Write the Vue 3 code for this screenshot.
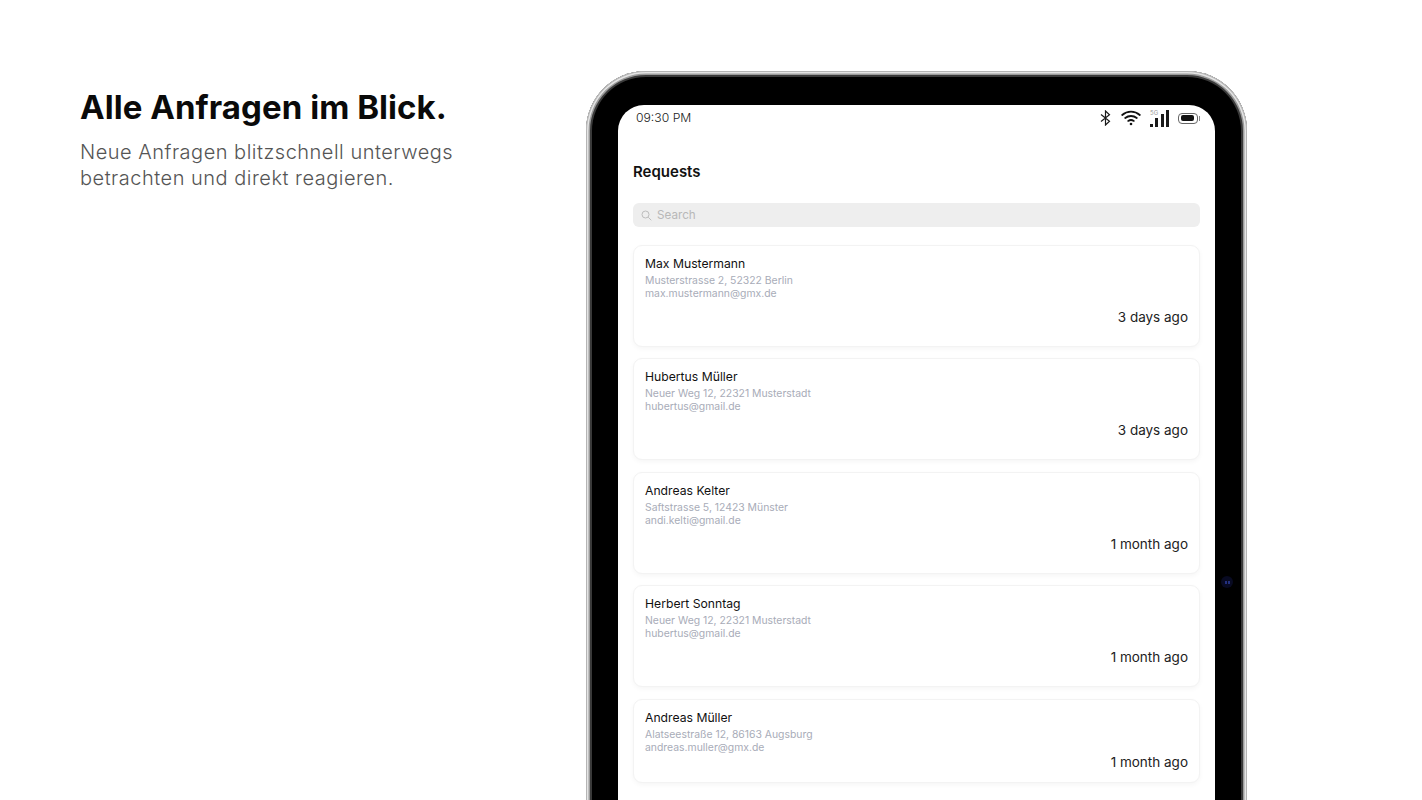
<template>
  <div class="page">
    <section class="intro">
      <h1>Alle Anfragen im Blick.</h1>
      <p>Neue Anfragen blitzschnell unterwegs<br />betrachten und direkt reagieren.</p>
    </section>

    <div class="device">
      <span class="camera"><i></i><i></i></span>
      <main class="screen">
        <div class="status">
          <span class="clock">09:30 PM</span>
          <div class="status-icons">
            <svg class="bluetooth" width="11" height="16" viewBox="0 0 11 16" fill="none" stroke="#1a1a1a" stroke-width="1.2">
              <path d="M1 4.5 9.5 11.2 5.5 15V1l4 3.8L1 11.5" />
            </svg>
            <svg width="20" height="16" viewBox="0 0 20 16" fill="none" stroke="#111" stroke-width="1.8" stroke-linecap="round">
              <path d="M1.2 5C6.2.6 13.8.6 18.800 5" />
              <path d="M4.2 8C7.600 5.300 12.400 5.300 15.800 8" />
              <path d="M7.200 10.900C8.900 9.800 11.100 9.800 12.800 10.900" />
              <circle cx="10" cy="14" r="1.300" fill="#111" stroke="none" />
            </svg>
            <div class="signal">
              <span class="five-g">5G</span>
              <i v-for="h in bars" :key="h" :style="{ height: h + 'px' }"></i>
            </div>
            <div class="battery"><span></span></div>
          </div>
        </div>

        <h2>Requests</h2>

        <div class="search">
          <svg width="11" height="11" viewBox="0 0 11 11" fill="none" stroke="#bdbdbd" stroke-width="1">
            <circle cx="4.500" cy="4.500" r="3.500" />
            <path d="M7.200 7.200 10.300 10.300" />
          </svg>
          <span>Search</span>
        </div>

        <div class="list">
          <article v-for="req in requests" :key="req.name" class="card" :class="{ short: req.short }">
            <div class="name">{{ req.name }}</div>
            <div class="meta">{{ req.address }}</div>
            <div class="meta">{{ req.email }}</div>
            <div class="age">{{ req.age }}</div>
          </article>
        </div>
      </main>
    </div>
  </div>
</template>

<script setup>
const bars = [3, 9, 13, 17]

const requests = [
  { name: 'Max Mustermann', address: 'Musterstrasse 2, 52322 Berlin', email: 'max.mustermann@gmx.de', age: '3 days ago' },
  { name: 'Hubertus Müller', address: 'Neuer Weg 12, 22321 Musterstadt', email: 'hubertus@gmail.de', age: '3 days ago' },
  { name: 'Andreas Kelter', address: 'Saftstrasse 5, 12423 Münster', email: 'andi.kelti@gmail.de', age: '1 month ago' },
  { name: 'Herbert Sonntag', address: 'Neuer Weg 12, 22321 Musterstadt', email: 'hubertus@gmail.de', age: '1 month ago' },
  { name: 'Andreas Müller', address: 'Alatseestraße 12, 86163 Augsburg', email: 'andreas.muller@gmx.de', age: '1 month ago', short: true }
]
</script>

<style scoped>
.page {
  display: flex;
  align-items: flex-start;
  height: 800px;
  overflow: hidden;
  background: #fff;
  font-family: Inter, "Noto Sans", sans-serif;
}

.intro {
  width: 506px;
  flex-shrink: 0;
  padding: 88px 0 0 80px;
}

.intro h1 {
  margin: 0;
  font-size: 33px;
  line-height: 39px;
  font-weight: 700;
  letter-spacing: 0.06px;
  color: #0a0a0a;
}

.intro p {
  margin: 12px 0 0;
  font-size: 20px;
  line-height: 26px;
  font-weight: 300;
  letter-spacing: 0.5px;
  color: #555;
}

.device {
  position: relative;
  width: 661px;
  height: 830px;
  flex-shrink: 0;
  margin-top: 71px;
  box-sizing: border-box;
  padding: 34px 32px 0;
  border-radius: 60px 60px 0 0;
  background: #000;
  box-shadow:
    inset 0 0 0 1px #b5b5b5,
    inset 0 0 0 2.500px #e4e4e4,
    inset 0 0 0 4px #9c9c9c,
    inset 0 0 0 6px #3a3a3a;
}

.camera {
  position: absolute;
  right: 14px;
  top: 505px;
  display: flex;
  align-items: center;
  justify-content: center;
  gap: 1px;
  width: 12px;
  height: 12px;
  border-radius: 50%;
  background: #080a22;
}

.camera i {
  width: 2px;
  height: 3px;
  background: #23307e;
}

.screen {
  height: 100%;
  box-sizing: border-box;
  padding: 0 15px;
  border-radius: 26px 26px 0 0;
  background: #fff;
}

.status {
  display: flex;
  justify-content: space-between;
  align-items: center;
  height: 26px;
  margin-left: 3px;
}

.clock {
  margin-top: -2px;
  font-size: 12.200px;
  font-weight: 300;
  color: #222;
}

.status-icons {
  display: flex;
  align-items: center;
  gap: 9px;
  margin-right: 2px;
}

.bluetooth {
  margin-right: 1px;
}

.signal {
  position: relative;
  display: flex;
  align-items: flex-end;
  gap: 2.300px;
  height: 17px;
}

.signal i {
  width: 3px;
  background: #1a1a1a;
}

.five-g {
  position: absolute;
  left: 0;
  top: -1px;
  font-size: 6px;
  line-height: 7px;
  color: #999;
}

.battery {
  position: relative;
  width: 20px;
  height: 11px;
  box-sizing: border-box;
  padding: 1.500px;
  border: 1px solid #666;
  border-radius: 4px;
}

.battery::after {
  content: "";
  position: absolute;
  right: -3px;
  top: 2px;
  width: 1px;
  height: 5px;
  background: #888;
}

.battery span {
  display: block;
  width: 13px;
  height: 100%;
  border-radius: 2px;
  background: #111;
}

h2 {
  margin: 31px 0 0;
  font-size: 15px;
  line-height: 20px;
  font-weight: 600;
  color: #111;
}

.search {
  display: flex;
  align-items: center;
  gap: 5px;
  height: 24px;
  margin-top: 21px;
  padding-left: 8px;
  border-radius: 6px;
  background: #eeeeee;
  font-size: 11.700px;
  color: #b8b8b8;
}

.list {
  display: flex;
  flex-direction: column;
  gap: 11.400px;
  margin-top: 18px;
}

.card {
  height: 102px;
  box-sizing: border-box;
  padding: 10px 11px 0;
  border: 1px solid #f3f3f3;
  border-radius: 9px;
  background: #fff;
  box-shadow: 0 2px 5px rgba(0, 0, 0, 0.04);
}

.card.short {
  height: 84px;
}

.name {
  font-size: 12.200px;
  line-height: 16px;
  font-weight: 400;
  color: #111;
}

.meta {
  font-size: 10.400px;
  line-height: 13px;
  color: #a8acb8;
}

.meta:nth-child(2) {
  margin-top: 2px;
}

.age {
  margin-top: 8px;
  font-size: 13.500px;
  line-height: 18px;
  text-align: right;
  color: #222;
}

.card.short .age {
  margin-top: -1px;
}
</style>

<style>
html,
body {
  overflow: hidden;
}
</style>
